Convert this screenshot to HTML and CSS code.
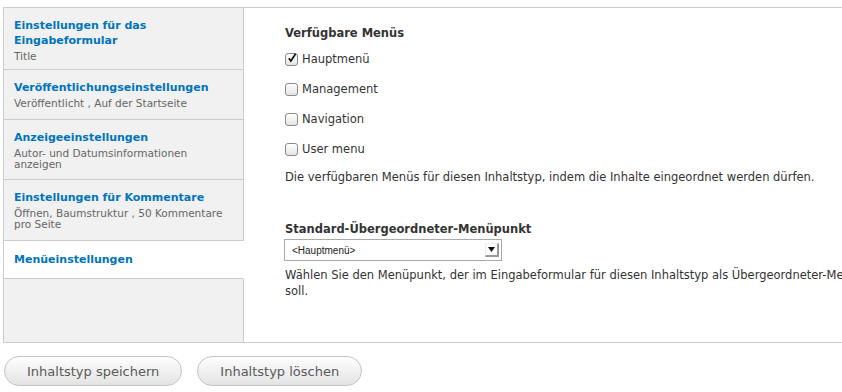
FILE: index.html
```html
<!DOCTYPE html>
<html lang="de">
<head>
	<meta charset="UTF-8">
	<title>Inhaltstyp bearbeiten</title>
	<link rel="stylesheet" href="styles.css">
</head>
<body>
	<div class="vertical-tabs">
		<div class="tab-list">
			<a class="tab first">
				<strong>Einstellungen für das Eingabeformular</strong>
				<span class="summary">Title</span>
			</a>
			<a class="tab">
				<strong>Veröffentlichungseinstellungen</strong>
				<span class="summary">Veröffentlicht , Auf der Startseite</span>
			</a>
			<a class="tab short">
				<strong>Anzeigeeinstellungen</strong>
				<span class="summary">Autor- und Datumsinformationen anzeigen</span>
			</a>
			<a class="tab">
				<strong>Einstellungen für Kommentare</strong>
				<span class="summary">Öffnen, Baumstruktur , 50 Kommentare pro Seite</span>
			</a>
			<a class="tab selected">
				<strong>Menüeinstellungen</strong>
			</a>
			<div class="tab-fill"></div>
		</div>

		<div class="tab-pane">
			<div class="form-item">
				<label class="title">Verfügbare Menüs</label>
				<div class="checks">
					<label class="check"><span class="box checked"><svg width="12" height="12" viewBox="0 0 12 12"><path d="M2.2 6.2 L4.6 9.6 L10.4 0.8" fill="none" stroke="#111" stroke-width="2"/></svg></span>Hauptmenü</label>
					<label class="check"><span class="box"></span>Management</label>
					<label class="check"><span class="box"></span>Navigation</label>
					<label class="check"><span class="box"></span>User menu</label>
				</div>
				<div class="description">Die verfügbaren Menüs für diesen Inhaltstyp, indem die Inhalte eingeordnet werden dürfen.</div>
			</div>

			<div class="form-item second">
				<label class="title">Standard-Übergeordneter-Menüpunkt</label>
				<div class="select">
					<span>&lt;Hauptmenü&gt;</span>
					<span class="arrow"><svg width="7" height="5" viewBox="0 0 7 5"><path d="M0 0 H7 L3.5 5 Z" fill="#111"/></svg></span>
				</div>
				<div class="description">Wählen Sie den Menüpunkt, der im Eingabeformular für diesen Inhaltstyp als Übergeordneter-Menüpunkt verwendet werden soll.</div>
			</div>
		</div>
	</div>

	<div class="actions">
		<button class="button">Inhaltstyp speichern</button>
		<button class="button">Inhaltstyp löschen</button>
	</div>
</body>
</html>
```

FILE: styles.css
```css
	body {
		margin: 0;
		padding: 7px 0 0 3px;
		font-family: 'DejaVu Sans', sans-serif;
		font-size: 12px;
		color: #333;
		background-color: #fff;
		overflow: hidden;}

	.vertical-tabs {
		display: flex;
		width: 900px;
		height: 334px;
		border: 1px solid #ccc;
		border-right: none;}
	.tab-list {
		width: 240px;
		flex-shrink: 0;
		display: flex;
		flex-direction: column;
		background-color: #f1f1f1;}
	.tab {
		display: block;
		padding: 10px 10px 10px 10px;
		border-bottom: 1px solid #ccc;
		border-right: 1px solid #ccc;}
	.tab.first {
		padding: 10px 10px 7px;}
	.tab.short {
		padding-bottom: 9px;}
	.tab strong {
		display: block;
		color: #0074bd;
		font-size: 11px;
		line-height: 15px;}
	.tab .summary {
		display: block;
		color: #666;
		font-size: 10.5px;
		line-height: 11px;
		margin-top: 3px;}
	.tab.selected {
		background-color: #fff;
		border-right-color: #fff;
		padding: 11px 10px;}
	.tab-fill {
		flex: 1;
		border-right: 1px solid #ccc;}

	.tab-pane {
		flex: 1;
		padding: 18px 0 0 41px;
		white-space: nowrap;}
	.title {
		display: block;
		font-weight: bold;
		font-size: 11.5px;
		line-height: 15px;
		margin-bottom: 3px;}
	.checks {
		display: flex;
		flex-direction: column;}
	.check {
		display: flex;
		align-items: center;
		height: 30px;
		font-size: 11.5px;}
	.box {
		width: 11px;
		height: 11px;
		border: 1px solid #8a8a8a;
		border-radius: 3px;
		background: linear-gradient(#fff, #e4e4e4);
		margin-right: 4px;
		display: flex;
		align-items: center;
		justify-content: center;}
	.box svg {
		margin: -3px 0 0 1px;}
	.description {
		font-size: 11.5px;
		color: #333;
		line-height: 16px;
		margin-top: 5px;}
	.second {
		margin-top: 37px;
		white-space: normal;}
	.select {
		display: flex;
		justify-content: space-between;
		align-items: center;
		height: 20px;
		border: 1px solid #aaa;
		font-family: 'Liberation Sans', sans-serif;
		font-size: 10px;
		color: #222;
		padding-left: 7px;
		margin-top: -1px;
		margin-left: -1px;
		width: 209px;}
	.arrow {
		width: 11px;
		height: 11px;
		margin-right: 2px;
		border-top: 1px solid #eee;
		border-left: 1px solid #eee;
		border-right: 2px solid #999;
		border-bottom: 2px solid #999;
		display: flex;
		align-items: center;
		justify-content: center;}
	.second .description {
		margin-top: 6px;
		width: 720px;}

	.actions {
		display: flex;
		gap: 15px;
		padding: 13px 0 0 1px;}
	.button {
		font-family: 'DejaVu Sans', sans-serif;
		font-size: 13px;
		color: #5a5a5a;
		height: 30px;
		padding: 0 22px;
		border: 1px solid #c4c4c4;
		border-radius: 15px;
		background: linear-gradient(#fefefe, #e3e3e3);}
```
